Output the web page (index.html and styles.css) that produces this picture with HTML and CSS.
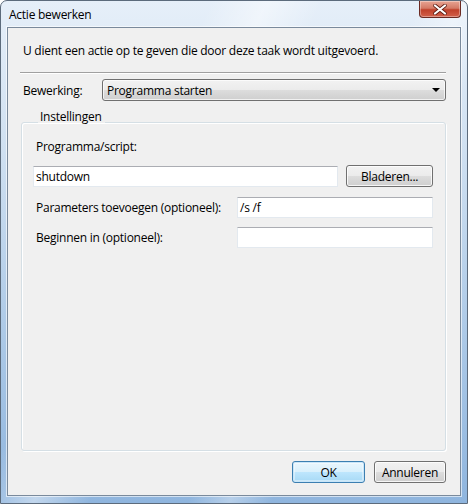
FILE: index.html
```html
<!DOCTYPE html>
<html lang="nl">
<head>
<meta charset="utf-8">
<title>Actie bewerken</title>
<link rel="stylesheet" href="styles.css">
</head>
<body>
<div class="window">
  <div class="titlebar">
    <span class="title">Actie bewerken</span>
    <button class="close" aria-label="Sluiten">
      <svg width="14" height="11" viewBox="0 0 14 11"><path d="M2 1.5 L12 9.5 M12 1.5 L2 9.5" stroke="#5a1a10" stroke-width="3.6" stroke-linecap="round"/><path d="M2 1.5 L12 9.5 M12 1.5 L2 9.5" stroke="#fff" stroke-width="2.2" stroke-linecap="round"/></svg>
    </button>
  </div>
  <div class="client">
    <p class="intro">U dient een actie op te geven die door deze taak wordt uitgevoerd.</p>
    <div class="sep"></div>
    <div class="action-row">
      <span class="lbl">Bewerking:</span>
      <div class="combo">
        <span>Programma starten</span>
        <span class="arrow"></span>
      </div>
    </div>
    <fieldset class="group">
      <legend>Instellingen</legend>
      <div class="lbl prog-lbl">Programma/script:</div>
      <div class="prog-row">
        <div class="input wide">shutdown</div>
        <button class="btn browse">Bladeren...</button>
      </div>
      <div class="field-row">
        <span class="lbl">Parameters toevoegen (optioneel):</span>
        <div class="input narrow">/s /f</div>
      </div>
      <div class="field-row">
        <span class="lbl">Beginnen in (optioneel):</span>
        <div class="input narrow"></div>
      </div>
    </fieldset>
    <div class="buttons">
      <button class="btn ok">OK</button>
      <button class="btn cancel">Annuleren</button>
    </div>
  </div>
</div>
</body>
</html>
```
FILE: styles.css
```css
* { box-sizing: border-box; }
html, body { margin: 0; padding: 0; }
body {
  width: 468px;
  height: 504px;
  overflow: hidden;
  font-family: "Open Sans", "Noto Sans", sans-serif;
  font-size: 12px;
  color: #000;
  background: #fff;
}
.window {
  width: 468px;
  height: 504px;
  border: 1px solid #5c6b7c;
  border-radius: 7px 7px 0 0;
  background:
    linear-gradient(115deg, rgba(255,255,255,0) 30%, rgba(255,255,255,0.45) 38%, rgba(255,255,255,0) 46%, rgba(255,255,255,0) 60%, rgba(255,255,255,0.35) 66%, rgba(255,255,255,0) 72%),
    linear-gradient(to bottom, #e6eff9 0%, #cfe0f1 30%, #a9c7e6 70%, #8fb5de 100%);
  padding: 0 6px 7px 6px;
  display: flex;
  flex-direction: column;
}
.titlebar {
  height: 26px;
  display: flex;
  justify-content: space-between;
  align-items: flex-start;
}
.title {
  padding: 6px 0 0 2px;
  line-height: 16px;
  font-size: 12px;
  letter-spacing: -0.25px;
}
.close {
  margin: 0;
  width: 42px;
  height: 17px;
  border: 1px solid #6b2a22;
  border-top: none;
  border-radius: 0 0 4px 4px;
  background: linear-gradient(to bottom, #e8a493 0%, #d47a66 45%, #c0412b 55%, #d2604a 100%);
  box-shadow: inset 0 0 0 1px rgba(255,255,255,0.35);
  padding: 0;
  display: flex;
  align-items: center;
  justify-content: center;
}
.client {
  flex: 1;
  background: #f0f0f0;
  border: 1px solid #7a8a9c;
  box-shadow: 0 0 0 1px rgba(255,255,255,0.6);
  padding: 15px 14px 12px 12px;
  display: flex;
  flex-direction: column;
  letter-spacing: -0.25px;
}
.intro {
  margin: 0 0 13px 3px;
  line-height: 16px;
}
.sep {
  height: 2px;
  border-top: 1px solid #a0a0a0;
  border-bottom: 1px solid #fff;
}
.action-row {
  margin-top: 5px;
  display: flex;
  align-items: center;
}
.action-row .lbl {
  width: 82px;
  padding-left: 3px;
}
.combo {
  flex: 1;
  height: 22px;
  border: 1px solid #707070;
  border-radius: 3px;
  background: linear-gradient(to bottom, #f2f2f2 0%, #ebebeb 50%, #dddddd 50%, #cfcfcf 100%);
  box-shadow: inset 0 0 0 1px rgba(255,255,255,0.7);
  display: flex;
  align-items: center;
  justify-content: space-between;
  padding: 0 5px 0 4px;
}
.arrow {
  width: 0;
  height: 0;
  border-left: 4px solid transparent;
  border-right: 4px solid transparent;
  border-top: 4px solid #000;
}
.group {
  flex: 1;
  margin: 8px 0 0 1px;
  padding: 0 12px 0 11px;
  border: 1px solid #d5dfe5;
  border-radius: 3px;
  box-shadow: inset 1px 1px 0 #fff, 1px 1px 0 #fff;
  min-width: 0;
}
.group legend {
  padding: 0 3px 10px 2px;
  margin-left: 5px;
  line-height: 16px;
}
.prog-lbl {
  margin: 4px 0 0 3px;
  line-height: 16px;
}
.prog-row {
  margin-top: 10px;
  display: flex;
  align-items: center;
  gap: 8px;
}
.input {
  height: 21px;
  background: #fff;
  border: 1px solid #e3e9ef;
  border-top-color: #abadb3;
  padding: 0 2px;
  line-height: 19px;
}
.wide { width: 306px; }
.btn {
  font-family: inherit;
  font-size: 12px;
  letter-spacing: -0.25px;
  color: #000;
  height: 22px;
  border: 1px solid #707070;
  border-radius: 3px;
  background: linear-gradient(to bottom, #f2f2f2 0%, #ebebeb 50%, #dddddd 50%, #cfcfcf 100%);
  box-shadow: inset 0 0 0 1px rgba(255,255,255,0.8);
  padding: 0;
  margin: 0;
}
.browse { width: 87px; }
.field-row {
  display: flex;
  align-items: center;
  justify-content: space-between;
  padding-left: 3px;
}
.field-row .input { width: 196px; }
.prog-row + .field-row { margin-top: 10px; }
.field-row + .field-row { margin-top: 9px; }
.buttons {
  margin-top: 10px;
  display: flex;
  justify-content: flex-end;
  gap: 9px;
}
.ok {
  width: 73px;
  border-color: #3c7fb1;
  box-shadow: inset 0 0 0 1px #c9e6f9, inset 0 0 0 2px rgba(255,255,255,0.4);
  background: linear-gradient(to bottom, #eaf6fd 0%, #d9f0fc 50%, #bee6fd 50%, #a7d9f5 100%);
}
.cancel { width: 72px; }
```
